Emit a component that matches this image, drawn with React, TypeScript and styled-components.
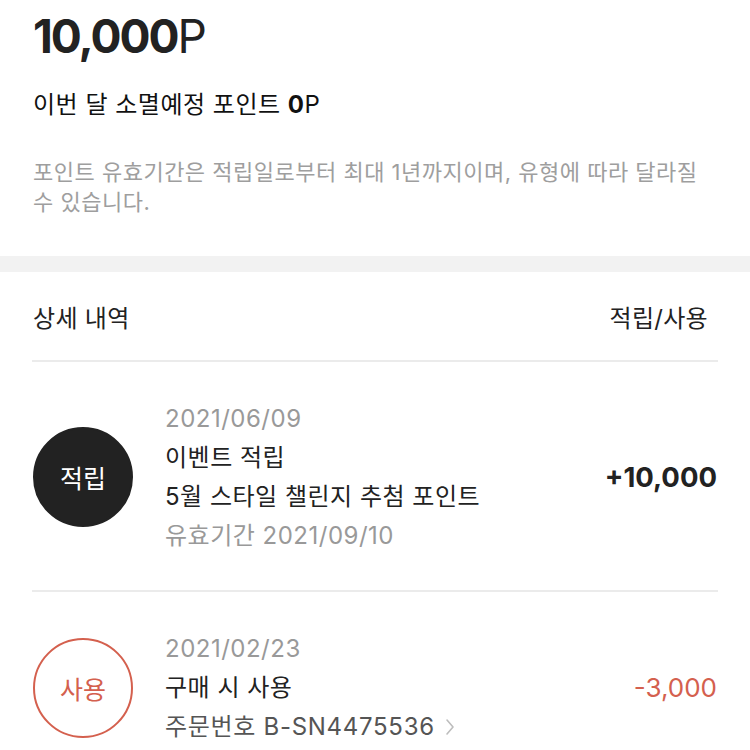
import React from 'react';
import styled, { createGlobalStyle } from 'styled-components';

const GlobalStyle = createGlobalStyle`
  body {
    margin: 0;
    background: #fff;
    font-family: Inter, "Noto Sans CJK KR", sans-serif;
    color: #222;
  }
`;

const Page = styled.div`
  width: 750px;
  height: 750px;
  overflow: hidden;
  background: #fff;
`;

const Summary = styled.section`
  padding: 8px 33px 39px;
`;

const Total = styled.div`
  font-size: 46px;
  line-height: 56px;
  font-weight: 700;
  letter-spacing: -2px;
  color: #222;
`;

const Unit = styled.span`
  font-weight: 400;
`;

const Expiring = styled.div`
  margin-top: 24px;
  font-size: 24px;
  line-height: 34px;
  letter-spacing: 0.5px;
  color: #111;
`;

const Strong = styled.b`
  font-weight: 700;
`;

const Notice = styled.p`
  margin: 35px 0 0;
  font-size: 22px;
  line-height: 30px;
  letter-spacing: 0.5px;
  color: #9e9e9e;
`;

const Band = styled.div`
  height: 16px;
  background: #f2f2f2;
`;

const List = styled.section`
  padding: 0 32px;
`;

const Header = styled.div`
  display: flex;
  justify-content: space-between;
  align-items: center;
  height: 88px;
  padding: 0 10px 0 1px;
  font-size: 24px;
  letter-spacing: 0.3px;
  color: #222;
  border-bottom: 2px solid #ebebeb;
`;

const Row = styled.div`
  display: flex;
  align-items: center;
  padding: 37px 1px 35px;
  border-bottom: 2px solid #ebebeb;
`;

const Badge = styled.div<{ $kind: 'earn' | 'use' }>`
  flex: none;
  width: 100px;
  height: 100px;
  border-radius: 50%;
  box-sizing: border-box;
  display: flex;
  align-items: center;
  justify-content: center;
  font-size: 25px;
  background: ${p => (p.$kind === 'earn' ? '#222' : '#fff')};
  color: ${p => (p.$kind === 'earn' ? '#fff' : '#d4604e')};
  border: 2px solid ${p => (p.$kind === 'earn' ? '#222' : '#d4604e')};
`;

const Body = styled.div`
  flex: 1;
  margin-left: 32px;
  display: flex;
  flex-direction: column;
`;

const Line = styled.div<{ $tone?: 'muted' | 'sub' }>`
  font-size: 24px;
  line-height: 39px;
  letter-spacing: ${p => (p.$tone === 'sub' ? '0.7px' : '0.5px')};
  color: ${p => (p.$tone === 'muted' ? '#999' : p.$tone === 'sub' ? '#555' : '#222')};
  display: flex;
  align-items: center;
`;

const Amount = styled.div<{ $kind: 'earn' | 'use' }>`
  font-size: ${p => (p.$kind === 'earn' ? '27.5px' : '26px')};
  font-weight: ${p => (p.$kind === 'earn' ? 700 : 400)};
  color: ${p => (p.$kind === 'earn' ? '#222' : '#d4604e')};
`;

const Chevron = () => (
  <svg width="10" height="18" viewBox="0 0 10 18" style={{ marginLeft: 10 }}>
    <path d="M2 2l6 7-6 7" fill="none" stroke="#bdbdbd" strokeWidth="1.6" strokeLinecap="round" strokeLinejoin="round" />
  </svg>
);

const history = [
  {
    kind: 'earn' as const,
    label: '적립',
    date: '2021/06/09',
    title: '이벤트 적립',
    detail: '5월 스타일 챌린지 추첨 포인트',
    extra: '유효기간 2021/09/10',
    amount: '+10,000',
  },
  {
    kind: 'use' as const,
    label: '사용',
    date: '2021/02/23',
    title: '구매 시 사용',
    order: '주문번호 B-SN4475536',
    amount: '-3,000',
  },
];

export default function App() {
  return (
    <Page>
      <GlobalStyle />
      <Summary>
        <Total>
          10,000<Unit>P</Unit>
        </Total>
        <Expiring>
          이번 달 소멸예정 포인트 <Strong>0</Strong>P
        </Expiring>
        <Notice>포인트 유효기간은 적립일로부터 최대 1년까지이며, 유형에 따라 달라질 수 있습니다.</Notice>
      </Summary>
      <Band />
      <List>
        <Header>
          <span>상세 내역</span>
          <span>적립/사용</span>
        </Header>
        {history.map(item => (
          <Row key={item.date}>
            <Badge $kind={item.kind}>{item.label}</Badge>
            <Body>
              <Line $tone="muted">{item.date}</Line>
              <Line>{item.title}</Line>
              {item.detail && <Line>{item.detail}</Line>}
              {item.extra && <Line $tone="muted">{item.extra}</Line>}
              {item.order && (
                <Line $tone="sub">
                  {item.order}
                  <Chevron />
                </Line>
              )}
            </Body>
            <Amount $kind={item.kind}>{item.amount}</Amount>
          </Row>
        ))}
      </List>
    </Page>
  );
}
